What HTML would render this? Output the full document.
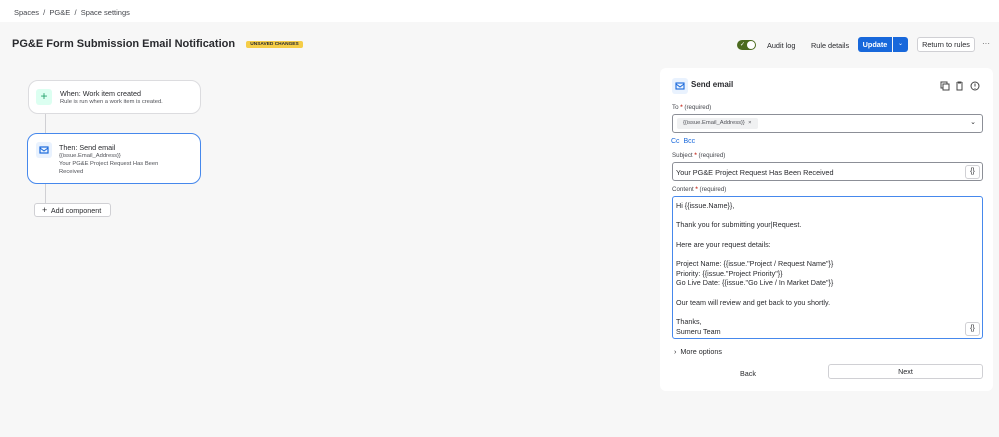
<!DOCTYPE html>
<html><head><style>
*{box-sizing:border-box;margin:0;padding:0}
body{width:999px;height:437px;background:#f7f7f7;font-family:"Liberation Sans",sans-serif;color:#292a2e;position:relative;overflow:hidden;font-size:7px}
.a{position:absolute}
.top{left:0;top:0;width:999px;height:22px;background:#fff}
.btn{position:absolute;border:1px solid #d0d0d4;border-radius:3px;background:#fff;font-size:7px;text-align:center}
.card{position:absolute;background:#fff;border:1px solid #dcdcdf;border-radius:10px}
.ic{position:absolute;width:16px;height:16px;border-radius:3px}
.lbl{font-size:6.2px;color:#44464c}
.lbl b{color:#c9372c}
.inp{position:absolute;background:#fff;border:1px solid #8c8f97;border-radius:3px}
</style></head><body>
<div class="a top"></div>
<div class="a" style="left:14px;top:8px;font-size:7.5px;color:#44464c">Spaces &nbsp;/&nbsp; PG&amp;E &nbsp;/&nbsp; Space settings</div>
<div class="a" style="left:12px;top:38px;font-size:11px;font-weight:bold">PG&amp;E Form Submission Email Notification</div>
<div class="a" style="left:246px;top:41px;width:57px;height:7px;background:#f5cd47;border-radius:2px;font-size:4.8px;font-weight:bold;line-height:7px;text-align:center">UNSAVED CHANGES</div>

<div class="a" style="left:737px;top:40px;width:19px;height:10px;border-radius:5px;background:#4c6b1f"><div class="a" style="right:1px;top:1px;width:8px;height:8px;border-radius:50%;background:#fff"></div><div class="a" style="left:3px;top:1px;color:#fff;font-size:6px">✓</div></div>
<div class="a" style="left:767px;top:41px;font-size:7.3px">Audit log</div>
<div class="a" style="left:811px;top:41px;font-size:7.3px">Rule details</div>
<div class="a" style="left:858px;top:37px;width:34px;height:15px;background:#1868db;border-radius:3px 0 0 3px;color:#fff;font-weight:bold;font-size:7.3px;line-height:15px;text-align:center">Update</div>
<div class="a" style="left:893px;top:37px;width:15px;height:15px;background:#1868db;border-radius:0 3px 3px 0;color:#fff;font-size:6px;line-height:15px;text-align:center">⌄</div>
<div class="btn" style="left:917px;top:37px;width:58px;height:15px;line-height:13px;font-size:7.3px">Return to rules</div>
<div class="a" style="left:982px;top:39px;font-size:8px;color:#555">···</div>

<div class="a" style="left:45px;top:113px;width:1px;height:90px;background:#d0d0d4"></div>
<div class="card" style="left:28px;top:80px;width:173px;height:34px">
<div class="ic" style="left:7px;top:8px;background:#dcfff1;color:#22a06b;font-size:12px;line-height:15px;text-align:center">+</div>
<div class="a" style="left:31px;top:8px;font-size:7.2px">When: Work item created</div>
<div class="a" style="left:31px;top:18px;font-size:5.8px;color:#505258">Rule is run when a work item is created.</div>
</div>
<div class="card" style="left:27px;top:133px;width:174px;height:51px;border:1.5px solid #4688ec">
<div class="ic" style="left:8px;top:8px;background:#e9f2fe"><svg width="16" height="16"><rect x="4" y="5" width="8" height="6" fill="none" stroke="#1868db" stroke-width="1.2"/><path d="M4 6l4 3 4-3" fill="none" stroke="#1868db"/></svg></div>
<div class="a" style="left:31px;top:9px;font-size:7.2px">Then: Send email</div>
<div class="a" style="left:31px;top:18px;font-size:5.8px;color:#505258;line-height:8px">{{issue.Email_Address}}<br>Your PG&amp;E Project Request Has Been<br>Received</div>
</div>
<div class="btn" style="left:34px;top:203px;width:77px;height:14px;line-height:12px;text-align:left;padding-left:7px;font-size:7.2px"><span style="font-size:9px">+</span>&nbsp; Add component</div>

<div class="a" style="left:660px;top:68px;width:333px;height:323px;background:#fff;border-radius:6px"></div>
<div class="ic" style="left:672px;top:78px;background:#e9f2fe"><svg width="16" height="16"><rect x="4" y="5" width="8" height="6" fill="none" stroke="#1868db" stroke-width="1.1"/><path d="M4 6l4 3 4-3" fill="none" stroke="#1868db"/></svg></div>
<div class="a" style="left:691px;top:80px;font-size:8px;font-weight:bold">Send email</div>
<svg class="a" style="left:940px;top:80px" width="40" height="12"><rect x="1" y="2" width="6" height="6" fill="none" stroke="#444"/><rect x="3" y="4" width="6" height="6" fill="#fff" stroke="#444"/><path d="M16 3h7M18 3v-1h3v1M17 4v6h5v-6" fill="none" stroke="#444"/><circle cx="35" cy="6" r="4" fill="none" stroke="#444"/><path d="M35 3.5v3M35 8v.8" stroke="#444"/></svg>

<div class="a lbl" style="left:672px;top:104px">To <b>*</b> (required)</div>
<div class="inp" style="left:672px;top:114px;width:311px;height:19px">
<div class="a" style="left:4px;top:3px;width:81px;height:11px;background:#f0f1f2;border-radius:2px;font-size:5.8px;line-height:11px;padding-left:6px;color:#505258">{{issue.Email_Address}} &nbsp;×</div>
<div class="a" style="right:6px;top:3px;font-size:7px">⌄</div>
</div>
<div class="a" style="left:671px;top:138px;font-size:7px;color:#1868db">Cc &nbsp;Bcc</div>
<div class="a lbl" style="left:672px;top:152px">Subject <b>*</b> (required)</div>
<div class="inp" style="left:672px;top:162px;width:311px;height:19px">
<div class="a" style="left:3px;top:5px;font-size:7.3px">Your PG&amp;E Project Request Has Been Received</div>
<div class="btn" style="right:2px;top:2px;width:15px;height:14px;line-height:12px">{}</div>
</div>
<div class="a lbl" style="left:672px;top:186px">Content <b>*</b> (required)</div>
<div class="a" style="left:672px;top:196px;width:311px;height:143px;border:1.5px solid #4688ec;border-radius:3px;background:#fff">
<div class="a" style="left:3px;top:4px;font-size:7.2px;line-height:9.65px">Hi {{issue.Name}},<br><br>Thank you for submitting your|Request.<br><br>Here are your request details:<br><br>Project Name: {{issue."Project / Request Name"}}<br>Priority: {{issue."Project Priority"}}<br>Go Live Date: {{issue."Go Live / In Market Date"}}<br><br>Our team will review and get back to you shortly.<br><br>Thanks,<br>Sumeru Team</div>
<div class="btn" style="right:2px;top:125px;width:15px;height:14px;line-height:12px">{}</div>
</div>
<div class="a" style="left:674px;top:347px;font-size:7.2px">›&nbsp; More options</div>
<div class="a" style="left:740px;top:369px;font-size:7.2px">Back</div>
<div class="btn" style="left:828px;top:364px;width:155px;height:15px;line-height:13px;font-size:7.2px">Next</div>
</body></html>
